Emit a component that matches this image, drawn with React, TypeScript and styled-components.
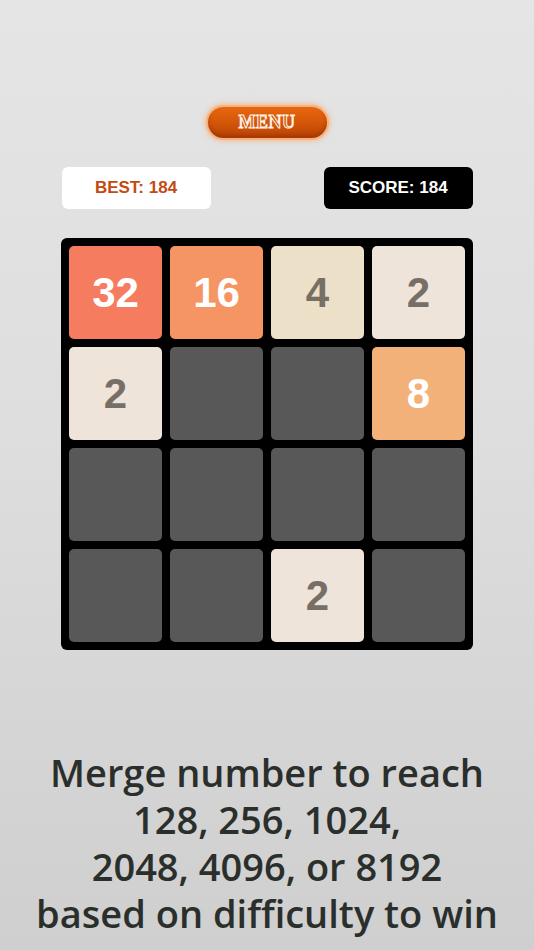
import styled, { createGlobalStyle } from "styled-components";

const GlobalStyle = createGlobalStyle`
  html, body {
    margin: 0;
    padding: 0;
  }
  body {
    width: 534px;
    height: 950px;
    overflow: hidden;
    background: linear-gradient(180deg, #e5e5e5 0%, #dedede 45%, #cfcfcf 100%);
    font-family: "Liberation Sans", Arial, sans-serif;
  }
`;

const Page = styled.div`
  width: 534px;
  height: 950px;
  display: flex;
  flex-direction: column;
  align-items: center;
  padding-top: 107px;
  box-sizing: border-box;
`;

const MenuButton = styled.button`
  width: 119px;
  height: 31px;
  border: none;
  border-radius: 16px;
  background: linear-gradient(180deg, #e8680f 0%, #d25408 55%, #b84406 100%);
  box-shadow: 0 0 0 2px #f6b27a, 0 0 5px 3px rgba(250, 170, 110, 0.7),
    inset 0 -3px 4px rgba(120, 30, 0, 0.35);
  display: flex;
  align-items: center;
  justify-content: center;
  padding: 0;
  font-family: "Liberation Serif", "Times New Roman", serif;
  font-weight: 700;
  font-size: 18px;
  letter-spacing: 0.5px;
  color: #d55a10;
  -webkit-text-stroke: 1px #fff3ea;
  cursor: pointer;
`;

const ScoreRow = styled.div`
  width: 411px;
  display: flex;
  justify-content: space-between;
  margin-top: 29px;
`;

const ScoreBox = styled.div<{ $dark?: boolean }>`
  width: 149px;
  height: 42px;
  border-radius: 6px;
  background: ${(p) => (p.$dark ? "#000" : "#fff")};
  color: ${(p) => (p.$dark ? "#fff" : "#c24b14")};
  display: flex;
  align-items: center;
  justify-content: center;
  font-weight: 700;
  font-size: 17px;
`;

const Board = styled.div`
  margin-top: 29px;
  width: 412px;
  height: 412px;
  box-sizing: border-box;
  padding: 8px;
  background: #000;
  border-radius: 6px;
  display: grid;
  grid-template-columns: repeat(4, 93px);
  grid-template-rows: repeat(4, 93px);
  gap: 8px;
`;

const tileColors: Record<number, { bg: string; fg: string }> = {
  0: { bg: "#585858", fg: "transparent" },
  2: { bg: "#eee4da", fg: "#776e65" },
  4: { bg: "#ede0c8", fg: "#776e65" },
  8: { bg: "#f2b179", fg: "#ffffff" },
  16: { bg: "#f59563", fg: "#ffffff" },
  32: { bg: "#f67c5f", fg: "#ffffff" },
};

const Tile = styled.div<{ $value: number }>`
  border-radius: 5px;
  background: ${(p) => tileColors[p.$value].bg};
  color: ${(p) => tileColors[p.$value].fg};
  display: flex;
  align-items: center;
  justify-content: center;
  font-weight: 700;
  font-size: 42px;
  padding-top: 1px;
`;

const Caption = styled.p`
  margin: 99px 0 0 0;
  text-align: center;
  font-family: "Open Sans", "Lato", sans-serif;
  font-weight: 600;
  font-size: 38px;
  line-height: 47px;
  color: #2b2f2c;
  white-space: nowrap;
`;

const grid = [
  [32, 16, 4, 2],
  [2, 0, 0, 8],
  [0, 0, 0, 0],
  [0, 0, 2, 0],
];

export default function App() {
  return (
    <>
      <GlobalStyle />
      <Page>
        <MenuButton>MENU</MenuButton>
        <ScoreRow>
          <ScoreBox>BEST: 184</ScoreBox>
          <ScoreBox $dark>SCORE: 184</ScoreBox>
        </ScoreRow>
        <Board>
          {grid.flat().map((v, i) => (
            <Tile key={i} $value={v}>
              {v > 0 ? v : ""}
            </Tile>
          ))}
        </Board>
        <Caption>
          Merge number to reach
          <br />
          128, 256, 1024,
          <br />
          2048, 4096, or 8192
          <br />
          based on difficulty to win
        </Caption>
      </Page>
    </>
  );
}
